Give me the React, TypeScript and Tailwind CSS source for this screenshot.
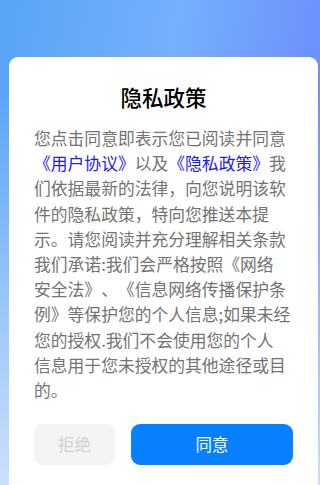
const lines: string[] = [
  '您点击同意即表示您已阅读并同意',
  '',
  '们依据最新的法律，向您说明该软',
  '件的隐私政策，特向您推送本提',
  '示。请您阅读并充分理解相关条款',
  '我们承诺:我们会严格按照《网络',
  '安全法》、《信息网络传播保护条',
  '例》等保护您的个人信息;如果未经',
  '您的授权.我们不会使用您的个人',
  '信息用于您未授权的其他途径或目',
  '的。',
];

export default function App() {
  return (
    <div
      className="relative h-[485px] w-[320px] overflow-hidden bg-[linear-gradient(180deg,rgba(255,255,255,0)_0%,rgba(255,255,255,0)_20%,rgba(214,230,253,0.9)_100%),linear-gradient(100deg,#58a4f7_0%,#74b0fd_45%,#6a7ffb_100%)] [text-spacing-trim:space-all]"
      style={{ fontFamily: '"Noto Sans CJK SC", "Noto Sans", sans-serif' }}
    >
      <div className="ml-[9px] mt-[57px] h-[440px] w-[309px] rounded-[9px] bg-white px-[25px] pt-[24px]">
        <h1 className="text-center text-[21.5px] font-medium leading-[31px] text-black">
          隐私政策
        </h1>
        <div className="mt-[14px] text-[16.8px] leading-[25.2px] text-[#737373]">
          {lines.map((line, i) =>
            i === 1 ? (
              <p key={i} className="whitespace-nowrap">
                <span className="text-[#1a1aff]">《用户协议》</span>
                以及
                <span className="text-[#1a1aff]">《隐私政策》</span>
                我
              </p>
            ) : (
              <p key={i} className="whitespace-nowrap">
                {line}
              </p>
            )
          )}
        </div>
        <div className="mt-[21px] flex gap-[16px]">
          <button className="h-[41px] w-[82px] rounded-[9px] bg-[#f4f4f4] text-[16.5px] text-[#d2d2d2]">
            拒绝
          </button>
          <button className="h-[41px] w-[164px] rounded-[9px] bg-[#0781ff] text-[16.5px] text-white">
            同意
          </button>
        </div>
      </div>
    </div>
  );
}
